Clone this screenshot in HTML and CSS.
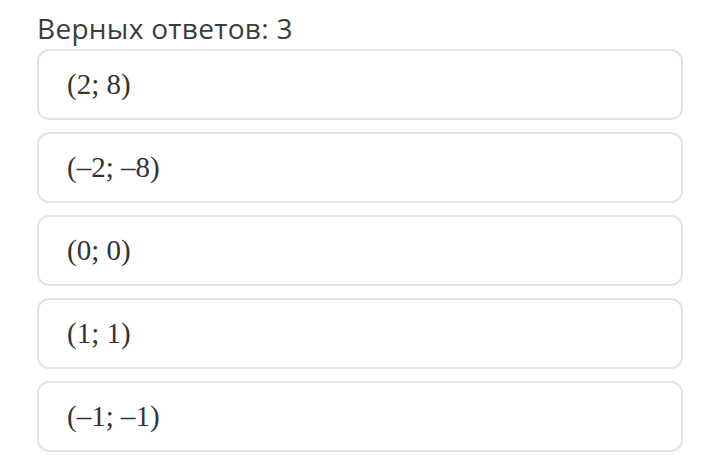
FILE: index.html
```html
<!DOCTYPE html>
<html>
<head>
<meta charset="utf-8">
<link rel="stylesheet" href="styles.css">
</head>
<body>
<div class="wrap">
  <div class="title">Верных ответов: 3</div>
  <div class="list">
    <div class="item">(2; 8)</div>
    <div class="item">(–2; –8)</div>
    <div class="item">(0; 0)</div>
    <div class="item">(1; 1)</div>
    <div class="item">(–1; –1)</div>
  </div>
</div>
</body>
</html>
```
FILE: styles.css
```css
html, body {
  margin: 0;
  padding: 0;
  background: #ffffff;
}
.wrap {
  width: 646px;
  padding: 10px 0 0 37px;
}
.title {
  font-family: "Open Sans", sans-serif;
  font-size: 28px;
  line-height: 36px;
  letter-spacing: 0.3px;
  color: #3a3d40;
  height: 39px;
}
.list {
  display: flex;
  flex-direction: column;
  gap: 12px;
}
.item {
  box-sizing: border-box;
  height: 71px;
  border: 2px solid #e3e5e4;
  border-radius: 12px;
  padding: 0 0 0 28px;
  display: flex;
  align-items: center;
  font-family: "Liberation Serif", serif;
  font-size: 29px;
  color: #333333;
}
```
